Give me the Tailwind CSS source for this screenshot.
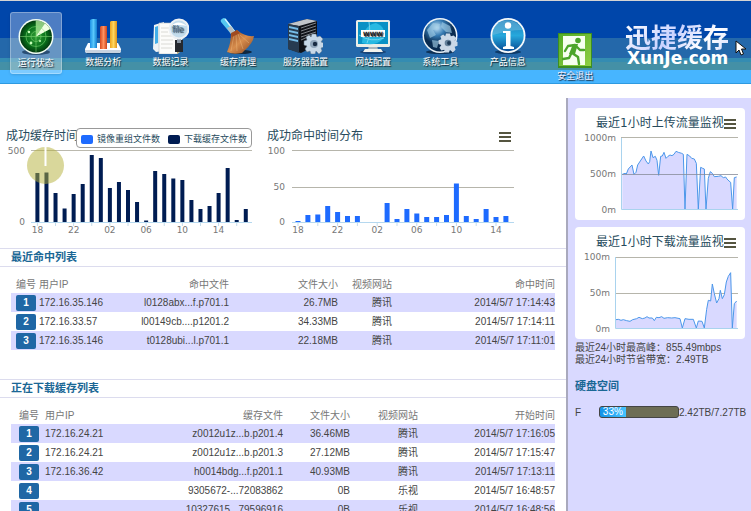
<!DOCTYPE html>
<html lang="zh-CN">
<head>
<meta charset="utf-8">
<meta name="viewport" content="width=device-width, initial-scale=1">
<title>迅捷缓存</title>
<script src="https://cdn.jsdelivr.net/npm/@tailwindcss/browser@4"></script>
</head>
<body class="bg-white font-['Liberation_Sans','Noto_Sans_CJK_SC',sans-serif] text-[10px] text-[#444]">
<div class="flex h-screen flex-col overflow-hidden">
  <header class="flex h-[84px] shrink-0 pl-[2px] bg-[linear-gradient(#d4d4d4_0_1px,#0046aa_1px_38px,#2468aa_38px_58px,#348cb2_58px_62px,#4490a6_62px_70px,#47b5ff_70px_83px,#2e9ae0_83px)]">
    <nav class="grid flex-1 grid-cols-9 items-start justify-items-center pt-3 text-[9px] leading-4 text-white [&_a]:flex [&_a]:w-[52px] [&_a]:flex-col [&_a]:items-center [&_a]:whitespace-nowrap [&_a]:pt-[6px] [&_a]:[text-shadow:1px_1px_1px_#123] [&_svg]:size-9">
      <a href="#" class="h-[62px] rounded-[3px] border border-white/30 bg-white/30 shadow-sm">
        <svg viewBox="0 0 36 36"><defs><radialGradient id="rad"><stop offset="0" stop-color="#2f9c35"/><stop offset=".65" stop-color="#08701a"/><stop offset="1" stop-color="#033a10"/></radialGradient></defs><ellipse cx="18" cy="33" rx="14" ry="3" fill="#02203f" opacity=".6"/><circle cx="18" cy="17.500" r="17.500" fill="#f4fff4"/><circle cx="18" cy="17.500" r="16" fill="url(#rad)"/><path d="M18 17.500 18 1.500A16 16 0 0 1 32 10Z" fill="#b6efa0" opacity=".75"/><path d="M18 17.500 27 4.500A16 16 0 0 1 32 10Z" fill="#f0ffe2"/><g fill="none" stroke="#8ade7e" stroke-width=".7" opacity=".75"><circle cx="18" cy="17.500" r="5"/><circle cx="18" cy="17.500" r="10"/><path d="M2 17.500H34M18 1.500V33.500"/></g><g fill="#c8ffba"><circle cx="11" cy="13" r="1.200"/><circle cx="13" cy="24" r="1.400"/><circle cx="22" cy="22" r="1"/></g></svg>运行状态</a>
      <a href="#" class="h-[62px]">
        <svg viewBox="0 0 36 36"><defs><linearGradient id="b1"><stop stop-color="#1d91e6"/><stop offset=".5" stop-color="#59c8fb"/><stop offset="1" stop-color="#127dd0"/></linearGradient><linearGradient id="b2"><stop stop-color="#d6491f"/><stop offset=".5" stop-color="#ff9260"/><stop offset="1" stop-color="#cd421b"/></linearGradient><linearGradient id="b3"><stop stop-color="#eea31b"/><stop offset=".5" stop-color="#ffd75e"/><stop offset="1" stop-color="#e09216"/></linearGradient></defs><path d="M2 34H35V36H2Z" fill="#143c66" opacity=".6"/><path d="M3 25H33L36 31Q36 35 34 35H2Q0 35 0 31Z" fill="#fbfcff"/><path d="M0 32H36V33Q36 35 34 35H2Q0 35 0 33Z" fill="#c8d2df"/><path d="M5 2 7 1H12V30H5Z" fill="url(#b1)"/><path d="M15 9 16 8H22V31H15Z" fill="url(#b2)"/><path d="M25 4 26 3H32V30H25Z" fill="url(#b3)"/></svg>数据分析</a>
      <a href="#" class="h-[62px]">
        <svg viewBox="0 0 36 36"><path d="M1 7 11 4V33L3 34 0 31Z" fill="#eef3f6"/><path d="M2 9 5 8V25L2 26Z" fill="#43aee8"/><path d="M6 5H24L29 12V32L24 36H6Z" fill="#fcfcfa" stroke="#b8bfc3" stroke-width=".6"/><path d="M8 10H16M8 14H15M8 18H19M8 22H20M8 26H20M8 30H19" stroke="#d2d2cc" stroke-width=".8"/><path d="M24 36V31L29 32Z" fill="#b8a66c"/><path d="M22 22H30V34H22Z" fill="#25282e"/><path d="M24 20H28V25H24Z" fill="#8995a3"/><circle cx="26" cy="11" r="9.500" fill="#c3dcec" stroke="#edf1f4" stroke-width="2"/><path d="M18 8Q25 1 34 8Q26 6 18 8Z" fill="#fff"/><text x="19" y="14" font-family="Liberation Sans" font-size="9" fill="#55758b">file</text></svg>数据记录</a>
      <a href="#" class="h-[62px]">
        <svg viewBox="0 0 36 36"><defs><linearGradient id="br" x1="0" y1="0" x2="1" y2="1"><stop stop-color="#873e19"/><stop offset=".5" stop-color="#d78d4d"/><stop offset="1" stop-color="#81401e"/></linearGradient></defs><ellipse cx="20" cy="34" rx="12" ry="2.200" fill="#0b1625" opacity=".8"/><path d="M2 1Q4-1 6 1L15 13 11 16 1 4Q0 2 2 1Z" fill="#55c7f0"/><path d="M5 1 15 14" stroke="#d5f5ff" stroke-width="1.300"/><path d="M7 10 11 8 15 14 11 16Z" fill="#b5bdc2"/><path d="M11 15 17 12Q25 19 34 18Q33 25 25 32L22 35Q13 37 7 34Q11 25 11 15Z" fill="url(#br)"/><path d="M14 17 11 33M16 17 17 33M18 16 23 31M20 17 29 25" stroke="#f0bf83" stroke-width=".6" fill="none" opacity=".7"/><path d="M11 16 17 12 20 15 12 19Z" fill="#9f4a20"/></svg>缓存清理</a>
      <a href="#" class="h-[62px]">
        <svg viewBox="0 0 36 36"><path d="M1 6 20 1 30 3V27L14 35 1 31Z" fill="#101319"/><path d="M1 6 20 1 30 3 12 8Z" fill="#c1c5ca"/><path d="M1 6 12 8V35L1 31Z" fill="#273b51"/><path d="M2 8 11 10V12L2 10ZM2 12 11 14V16L2 14ZM2 16 11 18V20L2 18ZM2 20 11 22V24L2 22Z" fill="#77bde8"/><path d="M14 10 29 5M14 13 29 8M14 16 29 11M14 19 29 14M14 22 25 17" stroke="#7d8187"/><g transform="translate(27 26)"><path d="M-2-10H2L3-7 6-8 9-5 7-2 10-1V3L7 4 8 7 5 10 2 7 1 10H-3L-4 7-7 8-9 5-7 2-10 1V-3L-7-4-8-7-5-9-3-7Z" fill="#c7d8e7" stroke="#6b7c8c" stroke-width=".5"/><circle r="4" fill="#8fa5ba"/><circle r="2.200" cx="1" fill="#182b42"/></g></svg>服务器配置</a>
      <a href="#" class="h-[62px]">
        <svg viewBox="0 0 36 36"><ellipse cx="18" cy="34" rx="13" ry="2" fill="#102f56" opacity=".6"/><path d="M14 27H22L23 32H13Z" fill="#abb7bd"/><path d="M10 31H26L28 34H8Z" fill="#f1f2ed"/><rect x="1" y="2" width="34" height="27" rx="1.500" fill="#eceee8"/><rect x="3" y="4" width="30" height="22" fill="#0a91c5"/><path d="M7 25Q8 7 21 5Q32 9 28 21Q20 29 7 25Z" fill="#28b9e2"/><path d="M4 17Q16 25 29 20M12 25Q16 16 14 4" fill="none" stroke="#71d6ee"/><rect x="6" y="12" width="24" height="7" fill="#fff"/><text x="18" y="18" text-anchor="middle" font-family="DejaVu Sans" font-weight="bold" font-size="6" fill="#222">WWW</text></svg>网站配置</a>
      <a href="#" class="h-[62px]">
        <svg viewBox="0 0 36 36"><defs><radialGradient id="gl" cx=".4" cy=".25"><stop stop-color="#c6e7fa"/><stop offset=".5" stop-color="#367bb3"/><stop offset="1" stop-color="#092b50"/></radialGradient></defs><ellipse cx="18" cy="34" rx="14" ry="2" fill="#061b34" opacity=".7"/><circle cx="18" cy="17.500" r="17.500" fill="#ecf4f9"/><circle cx="18" cy="17.500" r="16" fill="url(#gl)"/><path d="M5 12 11 5 18 6 16 11 11 12 14 17 8 20ZM20 4 28 8 30 15 24 14 19 9ZM10 22 17 23 15 30 11 29Z" fill="#a0cbe3" opacity=".65"/><g transform="translate(26 25) scale(.95)"><path d="M-2-10H2L3-7 6-8 9-5 7-2 10-1V3L7 4 8 7 5 10 2 7 1 10H-3L-4 7-7 8-9 5-7 2-10 1V-3L-7-4-8-7-5-9-3-7Z" fill="#cad8e7"/><circle r="3.500" fill="#64809a"/><circle cx="1" r="2" fill="#1c3855"/></g></svg>系统工具</a>
      <a href="#" class="h-[62px]">
        <svg viewBox="0 0 36 36"><defs><linearGradient id="inf" x1="0" y1="0" x2="0" y2="1"><stop stop-color="#1a79b9"/><stop offset=".5" stop-color="#26a8dc"/><stop offset="1" stop-color="#074a94"/></linearGradient></defs><ellipse cx="18" cy="34" rx="13" ry="2" fill="#06264b" opacity=".7"/><circle cx="18" cy="17.500" r="17.500" fill="#f5f9fb"/><circle cx="18" cy="17.500" r="15.700" fill="url(#inf)"/><path d="M3 17Q2 6 14 2.500Q27 1 32 12Q18 12 3 17Z" fill="#78bddd" opacity=".5"/><circle cx="18" cy="7.500" r="3.200" fill="#fff"/><path d="M13 13H20.500V28L24 29V31H13V29L16 28V15L13 15Z" fill="#fff"/></svg>产品信息</a>
      <a href="#" class="mt-[14px] h-[58px] text-[#eef]">
        <svg viewBox="0 0 36 36"><defs><linearGradient id="ex" x1="0" y1="0" x2="1" y2="1"><stop stop-color="#54ad28"/><stop offset="1" stop-color="#90cf42"/></linearGradient></defs><path d="M1 1H35V36H1Z" fill="#3d8e21"/><path d="M2 2H34V34H2Z" fill="url(#ex)"/><path d="M6 4H28V33H6Z" fill="#f7ffef"/><circle cx="21" cy="8.500" r="2.800" fill="#4ca52a"/><path d="M18 13 11 14 8 19M19 14 23 18 27 18M14 22 12 26 6 27M15 21 21 25 22 32" fill="none" stroke="#4ca52a" stroke-width="2.400" stroke-linecap="round" stroke-linejoin="round"/><path d="M16 12H21L18 22H12Z" fill="#4ca52a"/></svg>安全退出</a>
    </nav>
    <div class="relative w-[142px] shrink-0 pl-4 pt-[22px] font-['Noto_Sans_CJK_SC',sans-serif] font-bold text-[#eaeaff]">
      <div class="bg-[linear-gradient(135deg,#fff,#c9d2ff_40%,#fff_65%,#b9c8ff)] bg-clip-text text-[26px] leading-[28px] text-transparent">迅捷缓存</div>
      <div class="pl-[2px] font-['DejaVu_Sans',sans-serif] text-[17px] leading-4 text-white">XunJe.com</div>
      <svg class="absolute right-1 top-10 h-4 w-3" viewBox="0 0 12 16"><path d="M1 1V13L4 10 6 15 8.500 14 6.500 9H11Z" fill="#fff" stroke="#111"/></svg>
    </div>
  </header>

  <div class="flex min-h-0 flex-1 pt-[14px]">
    <main class="min-w-0 flex-1">
      <div class="flex h-[150px] text-[12px]">
        <section class="relative w-[260px] shrink-0">
          <svg id="cacheChart" class="h-[150px] w-full font-['DejaVu_Sans','Noto_Sans_CJK_SC',sans-serif] text-[9px]" viewBox="0 98 260 150" fill="#777">
            <text x="6" y="140" class="text-[12px]" fill="#274b5d">成功缓存时间</text>
            <path d="M31 150.500H252" stroke="#bbb9ae"/><path d="M31 222.500H252" stroke="#b5d8ef"/>
            <text x="25" y="154" text-anchor="end">500</text><text x="25" y="225" text-anchor="end">0</text>
          </svg>
          <div class="absolute right-2 top-[30px] flex h-5 items-center gap-1 whitespace-nowrap rounded-[4px] border border-[#999] bg-white px-1 pt-[2px] text-[9px] leading-4 text-[#274b5d]">
            <span class="h-[9px] w-3 rounded-[2px] bg-[#1e6bff]"></span><span>镜像重组文件数</span>
            <span class="ml-1 h-[9px] w-3 rounded-[2px] bg-[#001c52]"></span><span>下载缓存文件数</span>
          </div>
        </section>
        <section class="relative w-[270px] shrink-0">
          <svg id="hitChart" class="h-[150px] w-full font-['DejaVu_Sans','Noto_Sans_CJK_SC',sans-serif] text-[9px]" viewBox="260 98 270 150" fill="#777">
            <text x="267" y="140" class="text-[12px]" fill="#274b5d">成功命中时间分布</text>
            <path d="M292 150.500H514M292 187.500H514" stroke="#b6b5ab"/><path d="M292 222.500H514" stroke="#b5d8ef"/>
            <text x="285" y="154" text-anchor="end">100</text><text x="285" y="190" text-anchor="end">50</text><text x="285" y="225" text-anchor="end">0</text>
          </svg>
          <button aria-label="图表菜单" class="absolute right-[19px] top-[34px] flex h-[10px] w-3 flex-col justify-between"><i class="h-[2px] w-full bg-[#555540]"></i><i class="h-[2px] w-full bg-[#555540]"></i><i class="h-[2px] w-full bg-[#555540]"></i></button>
        </section>
      </div>

      <h2 class="h-[19px] border-y border-[#dcdcee] pl-[11px] text-[11px] font-bold leading-[17px] text-[#1a6795]">最近命中列表</h2>
      <div class="pl-[11px] pr-[11px] pt-2">
        <table class="w-full table-fixed whitespace-nowrap text-right [&_td]:h-[19px] [&_td]:p-0 [&_th]:h-[18px] [&_th]:p-0 [&_th]:font-normal [&_th]:text-[#777] [&_tbody_tr:nth-child(odd)]:bg-[#d9d9ff] [&_tr>:first-child]:pl-[5px] [&_tr>:first-child]:text-left [&_tr>:nth-child(2)]:text-left [&_b]:block [&_b]:h-4 [&_b]:w-5 [&_b]:rounded-[2px] [&_b]:bg-[#1f67a5] [&_b]:text-center [&_b]:leading-4 [&_b]:text-white">
          <colgroup><col class="w-[28px]"><col class="w-[91px]"><col class="w-[99px]"><col class="w-[109px]"><col class="w-[54px]"><col></colgroup>
          <thead><tr><th>编号</th><th>用户IP</th><th>命中文件</th><th>文件大小</th><th>视频网站</th><th>命中时间</th></tr></thead>
          <tbody>
            <tr><td><b>1</b></td><td>172.16.35.146</td><td>l0128abx...f.p701.1</td><td>26.7MB</td><td>腾讯</td><td>2014/5/7 17:14:43</td></tr>
            <tr><td><b>2</b></td><td>172.16.33.57</td><td>l00149cb....p1201.2</td><td>34.33MB</td><td>腾讯</td><td>2014/5/7 17:14:11</td></tr>
            <tr><td><b>3</b></td><td>172.16.35.146</td><td>t0128ubi...l.p701.1</td><td>22.18MB</td><td>腾讯</td><td>2014/5/7 17:11:01</td></tr>
          </tbody>
        </table>
      </div>

      <h2 class="mt-[29px] h-[19px] border-y border-[#dcdcee] pl-[11px] text-[11px] font-bold leading-[17px] text-[#1a6795]">正在下载缓存列表</h2>
      <div class="pl-[11px] pr-[11px] pt-2">
        <table class="w-full table-fixed whitespace-nowrap text-right [&_td]:h-[19px] [&_td]:p-0 [&_th]:h-[18px] [&_th]:p-0 [&_th]:font-normal [&_th]:text-[#777] [&_tbody_tr:nth-child(odd)]:bg-[#d9d9ff] [&_tr>:first-child]:pl-[8px] [&_tr>:first-child]:text-left [&_tr>:nth-child(2)]:text-left [&_b]:block [&_b]:h-4 [&_b]:w-5 [&_b]:rounded-[2px] [&_b]:bg-[#1f67a5] [&_b]:text-center [&_b]:leading-4 [&_b]:text-white">
          <colgroup><col class="w-[34px]"><col class="w-[100px]"><col class="w-[138px]"><col class="w-[67px]"><col class="w-[68px]"><col></colgroup>
          <thead><tr><th>编号</th><th>用户IP</th><th>缓存文件</th><th>文件大小</th><th>视频网站</th><th>开始时间</th></tr></thead>
          <tbody>
            <tr><td><b>1</b></td><td>172.16.24.21</td><td>z0012u1z...b.p201.4</td><td>36.46MB</td><td>腾讯</td><td>2014/5/7 17:16:05</td></tr>
            <tr><td><b>2</b></td><td>172.16.24.21</td><td>z0012u1z...b.p201.3</td><td>27.12MB</td><td>腾讯</td><td>2014/5/7 17:15:47</td></tr>
            <tr><td><b>3</b></td><td>172.16.36.42</td><td>h0014bdg...f.p201.1</td><td>40.93MB</td><td>腾讯</td><td>2014/5/7 17:13:11</td></tr>
            <tr><td><b>4</b></td><td></td><td>9305672-...72083862</td><td>0B</td><td>乐视</td><td>2014/5/7 16:48:57</td></tr>
            <tr><td><b>5</b></td><td></td><td>10327615...79596916</td><td>0B</td><td>乐视</td><td>2014/5/7 16:48:56</td></tr>
          </tbody>
        </table>
      </div>
    </main>

    <aside class="w-[185px] shrink-0 border-l-2 border-[#a9a9bd] bg-[#d9d9ff] pl-[7px] pr-[6px] pt-[10px]">
      <section class="relative h-[112px] rounded-[4px] bg-white">
        <svg class="h-[112px] w-full font-['DejaVu_Sans','Noto_Sans_CJK_SC',sans-serif] text-[9px]" viewBox="-1 0 170 112" fill="#777">
          <path d="M45 29.500H162" stroke="#b6b5ab"/>
          <g transform="scale(.3333) translate(-33 -39)"><path d="M172 343 172 238 180 235 184 237 190 222 201 210 207 238 213 232 218 210 226 198 236 183 243 198 250 207 254 200 258 168 264 188 271 184 276 196 281 241 287 184 292 183 297 172 303 190 309 184 315 180 321 182 327 178 333 169 340 172 350 175 355 178 360 343 366 178 374 183 380 190 388 192 394 205 400 343 407 217 413 220 418 222 423 343 430 250 436 230 442 235 448 245 460 244 468 242 475 248 482 246 486 252 492 258 497 262 503 343 508 248 515 246 515 343Z" fill="#d9d9ff"/><path d="M172 238 180 235 184 237 190 222 201 210 207 238 213 232 218 210 226 198 236 183 243 198 250 207 254 200 258 168 264 188 271 184 276 196 281 241 287 184 292 183 297 172 303 190 309 184 315 180 321 182 327 178 333 169 340 172 350 175 355 178 360 343 366 178 374 183 380 190 388 192 394 205 400 343 407 217 413 220 418 222 423 343 430 250 436 230 442 235 448 245 460 244 468 242 475 248 482 246 486 252 492 258 497 262 503 343 508 248 515 246" fill="none" stroke="#4b97ea" stroke-width="3"/></g>
          <path d="M45 66.500H162" stroke="#888d9a" opacity=".8"/><path d="M45.500 30V101.500H162" fill="none" stroke="#a9d3ee"/>
          <text x="20" y="19" class="text-[12px]" fill="#274b5d">最近1小时上传流量监视</text>
          <text x="40" y="33" text-anchor="end">1000m</text><text x="40" y="69" text-anchor="end">500m</text><text x="40" y="105" text-anchor="end">0m</text>
        </svg>
        <button aria-label="图表菜单" class="absolute right-[9px] top-[11px] flex h-[10px] w-3 flex-col justify-between"><i class="h-[2px] w-full bg-[#555540]"></i><i class="h-[2px] w-full bg-[#555540]"></i><i class="h-[2px] w-full bg-[#555540]"></i></button>
      </section>
      <section class="relative mt-[7px] h-[112px] rounded-[4px] bg-white">
        <svg class="h-[112px] w-full font-['DejaVu_Sans','Noto_Sans_CJK_SC',sans-serif] text-[9px]" viewBox="-1 0 170 112" fill="#777">
          <path d="M39 30.500H162M39 66.500H162" stroke="#b6b5ab"/>
          <g transform="scale(.3333) translate(-33 -15)"><path d="M153 319 153 293 160 292 168 295 175 293 185 296 195 298 203 293 215 290 222 286 232 290 240 288 246 284 252 288 262 288 268 296 274 286 282 287 290 284 297 289 308 287 320 288 330 287 345 290 352 318 360 290 372 292 385 292 394 318 400 297 411 298 418 318 425 262 430 235 437 237 442 186 448 215 455 243 462 230 466 205 472 230 478 218 484 180 490 163 497 152 502 318 508 245 515 237 515 319Z" fill="#d9d9ff"/><path d="M153 293 160 292 168 295 175 293 185 296 195 298 203 293 215 290 222 286 232 290 240 288 246 284 252 288 262 288 268 296 274 286 282 287 290 284 297 289 308 287 320 288 330 287 345 290 352 318 360 290 372 292 385 292 394 318 400 297 411 298 418 318 425 262 430 235 437 237 442 186 448 215 455 243 462 230 466 205 472 230 478 218 484 180 490 163 497 152 502 318 508 245 515 237" fill="none" stroke="#4b97ea" stroke-width="3"/></g>
          <path d="M39.500 30V101.500H162" fill="none" stroke="#a9d3ee"/>
          <text x="20" y="19" class="text-[12px]" fill="#274b5d">最近1小时下载流量监视</text>
          <text x="34" y="33" text-anchor="end">100m</text><text x="34" y="69" text-anchor="end">50m</text><text x="34" y="105" text-anchor="end">0m</text>
        </svg>
        <button aria-label="图表菜单" class="absolute right-[9px] top-[11px] flex h-[10px] w-3 flex-col justify-between"><i class="h-[2px] w-full bg-[#555540]"></i><i class="h-[2px] w-full bg-[#555540]"></i><i class="h-[2px] w-full bg-[#555540]"></i></button>
      </section>
      <p class="mt-[3px] whitespace-nowrap leading-[12px]">最近24小时最高峰：855.49mbps<br>最近24小时节省带宽：2.49TB</p>
      <h2 class="mt-3 text-[11px] font-bold leading-4 text-[#1a6795]">硬盘空间</h2>
      <div class="mt-[10px] flex h-4 items-center whitespace-nowrap">
        <span class="w-6 shrink-0">F</span>
        <div class="h-3 w-20 shrink-0 overflow-hidden rounded-[3px] border border-[#444] bg-[#6d6d55]" role="progressbar" aria-label="F" aria-valuenow="33">
          <div class="h-full bg-gradient-to-r from-[#1292e8] to-[#45c4ff] text-center text-[10px] leading-[10px] text-white" style="width:33%">33%</div>
        </div>
        <span>2.42TB/7.27TB</span>
      </div>
    </aside>
  </div>
</div>
<script>
const NS = 'http://www.w3.org/2000/svg';
function add(svg, tag, attrs, text) {
  const el = document.createElementNS(NS, tag);
  for (const k in attrs) el.setAttribute(k, attrs[k]);
  if (text) el.textContent = text;
  svg.appendChild(el);
}
function bars(id, start, step, width, color, heights) {
  const svg = document.getElementById(id);
  heights.forEach((h, i) => {
    const x = start + i * step;
    if (h) add(svg, 'rect', {x: x - width / 2, y: 222 - h, width, height: h, fill: color});
    if (i % 2 === 0) add(svg, 'path', {d: `M${x} 223v3`, stroke: '#c5dcea'});
  });
  ['18', '22', '02', '06', '10', '14'].forEach((t, i) =>
    add(svg, 'text', {x: start + i * 4 * step, y: 233, 'text-anchor': 'middle'}, t));
  return svg;
}
const cache = bars('cacheChart', 37.4, 9.06, 4, '#001c52',
  [49, 49.5, 29, 13.5, 28, 38, 67, 64, 34, 40, 32, 20, 1.5, 51, 48, 43.5, 42, 22, 13, 16, 29, 54, 2, 13]);
add(cache, 'circle', {cx: 45.5, cy: 165.5, r: 18.5, fill: '#b4af38', 'fill-opacity': .5});
add(cache, 'path', {d: 'M45.5 147V166', stroke: '#fff', 'stroke-width': 2});
bars('hitChart', 298, 9.9, 5, '#1e6bff',
  [1, 7, 7.5, 16, 10, 6, 6, 0, 0, 19, 3, 13, 8.5, 5, 5, 7, 38.5, 6, 3, 13, 5, 6]);
</script>
</body>
</html>
